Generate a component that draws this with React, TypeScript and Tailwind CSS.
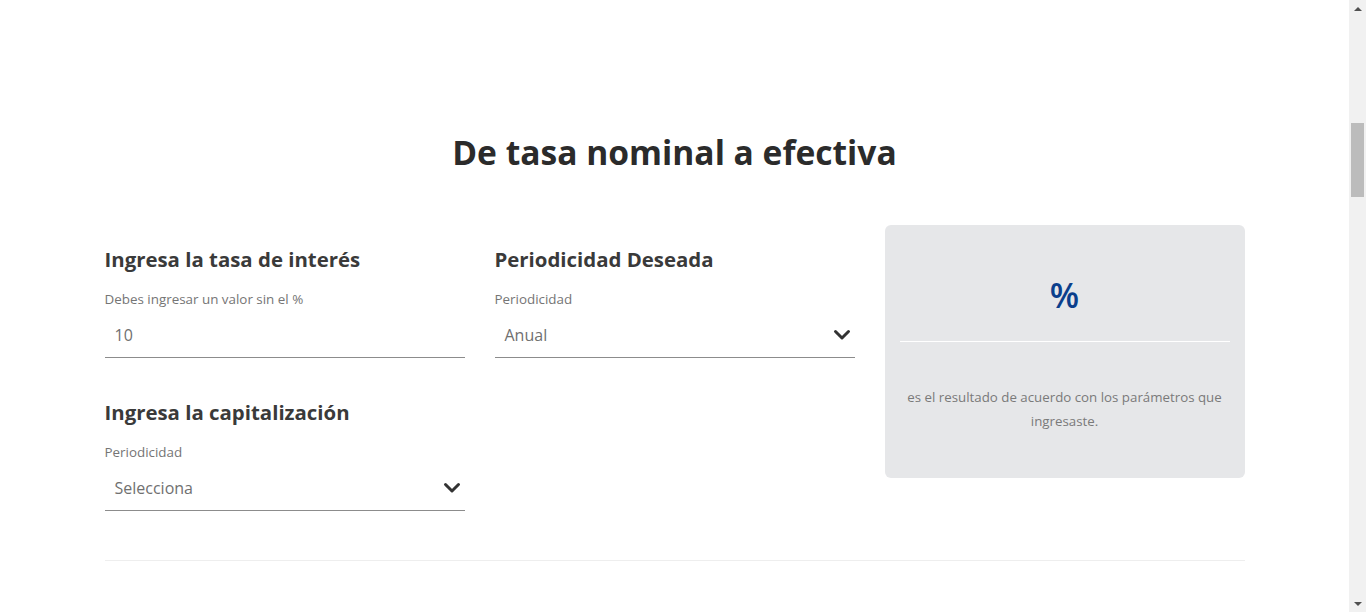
const font = { fontFamily: '"Open Sans", "Liberation Sans", sans-serif' };

const Chevron = () => (
  <svg width="18" height="12" viewBox="0 0 18 12" className="mr-[-6px]">
    <polyline points="2.5,2.5 9,9 15.5,2.5" fill="none" stroke="#333" strokeWidth="3" strokeLinecap="round" strokeLinejoin="round" />
  </svg>
);

const Field = ({ label, value, select }: { label: string; value: string; select?: boolean }) => (
  <div>
    <p className="mt-[15px] text-[13.4px] leading-[20px] text-[#757575]">{label}</p>
    <div className="mt-[4px] h-[45px] flex items-center justify-between pl-[10px] pr-[10px] pb-[1px] border-b border-[#8c8c8c]">
      <span className="text-[16px] text-[#707070]">{value}</span>
      {select && <Chevron />}
    </div>
  </div>
);

const Scrollbar = () => (
  <div className="w-[17px] h-full bg-[#f1f1f1] flex flex-col items-center">
    <div className="h-[17px] flex items-center justify-center">
      <div className="w-0 h-0 border-l-[4px] border-r-[4px] border-b-[4px] border-l-transparent border-r-transparent border-b-[#505050]" />
    </div>
    <div className="mt-[106px] w-[13px] h-[74px] bg-[#bcbcbc]" />
    <div className="flex-1" />
    <div className="h-[17px] flex items-center justify-center">
      <div className="w-0 h-0 border-l-[4px] border-r-[4px] border-t-[4px] border-l-transparent border-r-transparent border-t-[#505050]" />
    </div>
  </div>
);

export default function App() {
  return (
    <div className="flex h-[612px] overflow-hidden bg-white" style={font}>
      <main className="flex-1">
        <div className="max-w-[1140px] mx-auto">
          <h1 className="mt-[128px] text-center text-[33.6px] leading-[48px] font-bold text-[#2b2b2b]">
            De tasa nominal a efectiva
          </h1>

          <div className="mt-[49px] grid grid-cols-3 gap-x-[30px]">
            <div className="pt-[19px]">
              <h2 className="text-[20.4px] leading-[30px] font-bold text-[#3a3a3a]">Ingresa la tasa de interés</h2>
              <Field label="Debes ingresar un valor sin el %" value="10" />

              <h2 className="mt-[39px] text-[20.4px] leading-[30px] font-bold text-[#3a3a3a]">Ingresa la capitalización</h2>
              <Field label="Periodicidad" value="Selecciona" select />
            </div>

            <div className="pt-[19px]">
              <h2 className="text-[20.4px] leading-[30px] font-bold text-[#3a3a3a]">Periodicidad Deseada</h2>
              <Field label="Periodicidad" value="Anual" select />
            </div>

            <div>
              <div className="h-[253px] rounded-[6px] bg-[#e6e7e9] pt-[46px]">
                <p className="h-[48px] text-center text-[34px] leading-[48px] font-semibold text-[#0b3f8c]">%</p>
                <div className="mt-[22px] mx-[15px] h-px bg-white" />
                <p className="mt-[43px] px-[18px] text-center text-[13.3px] leading-[24px] text-[#7a7a7a]">
                  es el resultado de acuerdo con los parámetros que ingresaste.
                </p>
              </div>
            </div>
          </div>

          <div className="mt-[49px] border-t border-[#eeeeee] h-[60px]" />
        </div>
      </main>
      <Scrollbar />
    </div>
  );
}
